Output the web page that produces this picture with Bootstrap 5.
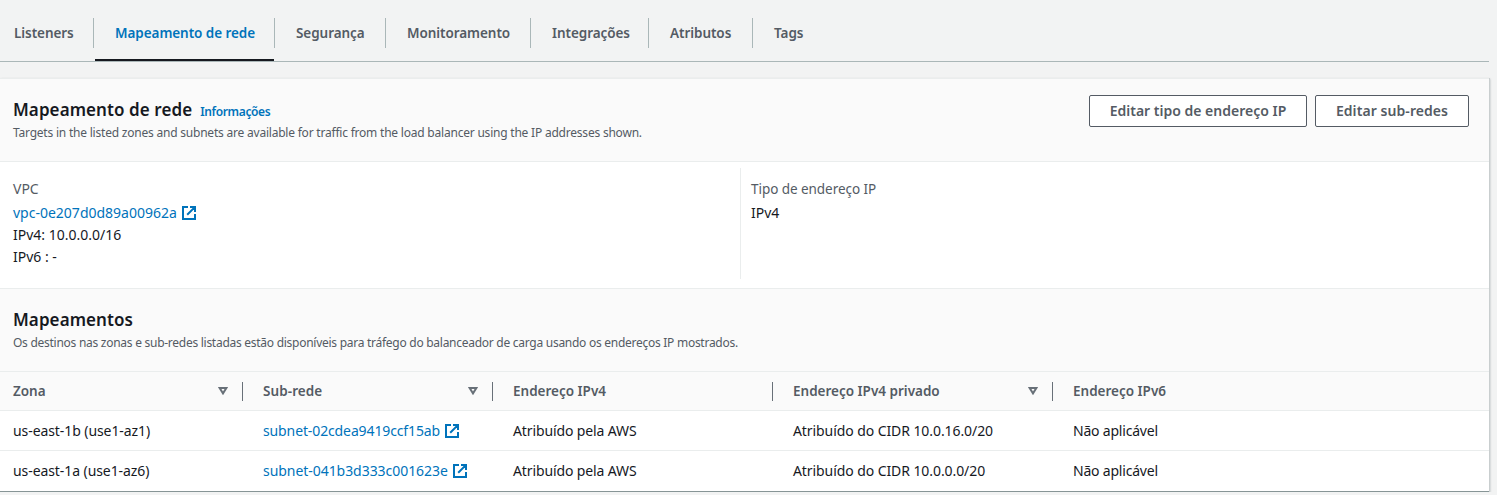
<!DOCTYPE html>
<html lang="pt-BR">
<head>
<meta charset="utf-8">
<meta name="viewport" content="width=device-width, initial-scale=1">
<title>Mapeamento de rede</title>
<link href="https://cdn.jsdelivr.net/npm/bootstrap@5.3.0/dist/css/bootstrap.min.css" rel="stylesheet">
<style>
body{background:#f2f3f3;color:#16191f;font-family:"Noto Sans","Open Sans",sans-serif;font-size:14px;line-height:22px;overflow:hidden;padding-right:8px}
a{color:#0073bb;text-decoration:none}
/* tracking steps */
.t1{letter-spacing:.08px}.n05{letter-spacing:-.05px}.n08{letter-spacing:-.08px}.n12{letter-spacing:-.12px}.n20{letter-spacing:-.2px}
.tabs{height:62px;border-bottom:1px solid #aab7b8;padding-top:18px}
.tabs .nav-item{height:43px;display:flex;align-items:flex-start;position:relative}
.tabs .nav-link{width:100%;height:30px;padding:4px 0 4px 21px;font-size:13.5px;line-height:22px;font-weight:600;letter-spacing:-.06px;color:#545b64;white-space:nowrap;border-right:1px solid #aab7b8}
.tabs .nav-item:first-child .nav-link{padding-left:14px}
.tabs .nav-item:last-child .nav-link{border-right:0}
.tabs .nav-link.active{color:#0073bb}
.tabs .nav-item.current::after{content:"";position:absolute;left:1px;right:1px;bottom:0;height:2px;background:#16191f}
.w1{width:94px}.w2{width:181px}.w3{width:111px}.w4{width:145px}.w5{width:118px}.w6{width:104px}
.panel{margin-top:16px;background:#fff;border-top:1px solid #eaeded;border-bottom:1px solid #879596;box-shadow:1px 0 0 #c9cecf,1px 1px 2px rgba(0,28,36,.3)}
.head-bar{background:#fafafa;border-bottom:1px solid #eaeded;height:83px;padding:19px 20px 0 13px}
h2{font-size:17px;line-height:24px;font-weight:600;margin:0;color:#16191f;letter-spacing:.08px}
.info-link{font-size:12px;font-weight:600;margin-left:8px;line-height:18px;letter-spacing:-.36px}
.desc{font-size:12px;line-height:18px;color:#545b64;margin:2px 0 0;letter-spacing:-.212px}
.desc.long{letter-spacing:-.268px}
.btn-line{height:32px;border:1px solid #545b64;border-radius:2px;background:#fff;color:#545b64;font-size:14px;font-weight:600;line-height:20px;padding:5px 0;white-space:nowrap}
.actions{margin-top:-3px}
.b1{width:218px}.b2{width:154px;letter-spacing:.07px}
.details{height:127px;border-bottom:1px solid #eaeded}
.details .lhs{width:740px;padding:16px 13px 0}
.details .rhs{border-left:1px solid #eaeded;height:111px;margin-top:6px;padding:10px 10px 0;flex:1}
.lbl{color:#545b64;margin-bottom:2px}
.rhs .lbl{font-size:13.5px}
.ext{width:14px;height:14px;display:block;margin-left:5px}
.grid-tb{table-layout:fixed;width:100%;border-collapse:separate;border-spacing:0}
.grid-tb th,.grid-tb td{padding:0 0 0 20px;height:40px;border-bottom:1px solid #eaeded;vertical-align:middle}
.grid-tb th:first-child,.grid-tb td:first-child{padding-left:13px}
.grid-tb th{background:#fafafa;color:#545b64;font-size:13.5px;font-weight:600;height:39px}
.grid-tb tr:last-child td{border-bottom:0}
.sep{width:1px;height:19px;background:#687078;margin-left:14px}
.c1{width:243px}.c2{width:250px}.c3{width:280px}
</style>
</head>
<body>
<ul class="nav tabs flex-nowrap">
<li class="nav-item w1"><a class="nav-link" href="#">Listeners</a></li>
<li class="nav-item w2 current"><a class="nav-link active" href="#">Mapeamento de rede</a></li>
<li class="nav-item w3"><a class="nav-link" href="#">Segurança</a></li>
<li class="nav-item w4"><a class="nav-link" href="#">Monitoramento</a></li>
<li class="nav-item w5"><a class="nav-link n20" href="#">Integrações</a></li>
<li class="nav-item w6"><a class="nav-link" href="#">Atributos</a></li>
<li class="nav-item w7"><a class="nav-link t1" href="#">Tags</a></li>
</ul>
<svg class="d-none"><symbol id="ext" viewBox="0 0 14 14"><path d="M6 1H1v12h12V8M8 1h5v5M12.6 1.4 5.2 8.8" fill="none" stroke="#0073bb" stroke-width="2"/></symbol>
<symbol id="sort" viewBox="0 0 10 8"><path d="M1.6 1h6.8L5 6.4Z" fill="none" stroke="#687078" stroke-width="2"/></symbol></svg>
<main class="panel">
<header class="head-bar d-flex justify-content-between">
<div>
<div class="d-flex align-items-baseline"><h2>Mapeamento de rede</h2><a class="info-link" href="#">Informações</a></div>
<p class="desc">Targets in the listed zones and subnets are available for traffic from the load balancer using the IP addresses shown.</p>
</div>
<div class="actions d-flex align-items-start gap-2"><button class="btn btn-line b1">Editar tipo de endereço IP</button><button class="btn btn-line b2">Editar sub-redes</button></div>
</header>
<section class="details d-flex">
<div class="lhs"><div class="lbl">VPC</div>
<div class="d-flex align-items-center"><a href="#">vpc-0e207d0d89a00962a</a><svg class="ext"><use href="#ext"/></svg></div>
<div>IPv4: 10.0.0.0/16</div><div>IPv6 : -</div></div>
<div class="rhs"><div class="lbl n05">Tipo de endereço IP</div><div>IPv4</div></div>
</section>
<header class="head-bar"><h2>Mapeamentos</h2><p class="desc long">Os destinos nas zonas e sub-redes listadas estão disponíveis para tráfego do balanceador de carga usando os endereços IP mostrados.</p></header>
<table class="grid-tb">
<colgroup><col class="c1"><col class="c2"><col class="c3"><col class="c3"><col></colgroup>
<thead><tr>
<th><div class="d-flex align-items-center"><span class="me-auto">Zona</span><svg width="10" height="8"><use href="#sort"/></svg><i class="sep"></i></div></th>
<th><div class="d-flex align-items-center"><span class="me-auto t1">Sub-rede</span><svg width="10" height="8"><use href="#sort"/></svg><i class="sep"></i></div></th>
<th><div class="d-flex align-items-center"><span class="me-auto">Endereço IPv4</span><i class="sep"></i></div></th>
<th><div class="d-flex align-items-center"><span class="me-auto">Endereço IPv4 privado</span><svg width="10" height="8"><use href="#sort"/></svg><i class="sep"></i></div></th>
<th>Endereço IPv6</th>
</tr></thead>
<tbody>
<tr><td class="n08">us-east-1b (use1-az1)</td><td><div class="d-flex align-items-center"><a class="n12" href="#">subnet-02cdea9419ccf15ab</a><svg class="ext"><use href="#ext"/></svg></div></td><td class="n12">Atribuído pela AWS</td><td class="n08">Atribuído do CIDR 10.0.16.0/20</td><td class="n20">Não aplicável</td></tr>
<tr><td class="n08">us-east-1a (use1-az6)</td><td><div class="d-flex align-items-center"><a class="n05" href="#">subnet-041b3d333c001623e</a><svg class="ext"><use href="#ext"/></svg></div></td><td class="n12">Atribuído pela AWS</td><td class="n08">Atribuído do CIDR 10.0.0.0/20</td><td class="n20">Não aplicável</td></tr>
</tbody>
</table>
</main>
<script src="https://cdn.jsdelivr.net/npm/bootstrap@5.3.0/dist/js/bootstrap.bundle.min.js"></script>
</body>
</html>
